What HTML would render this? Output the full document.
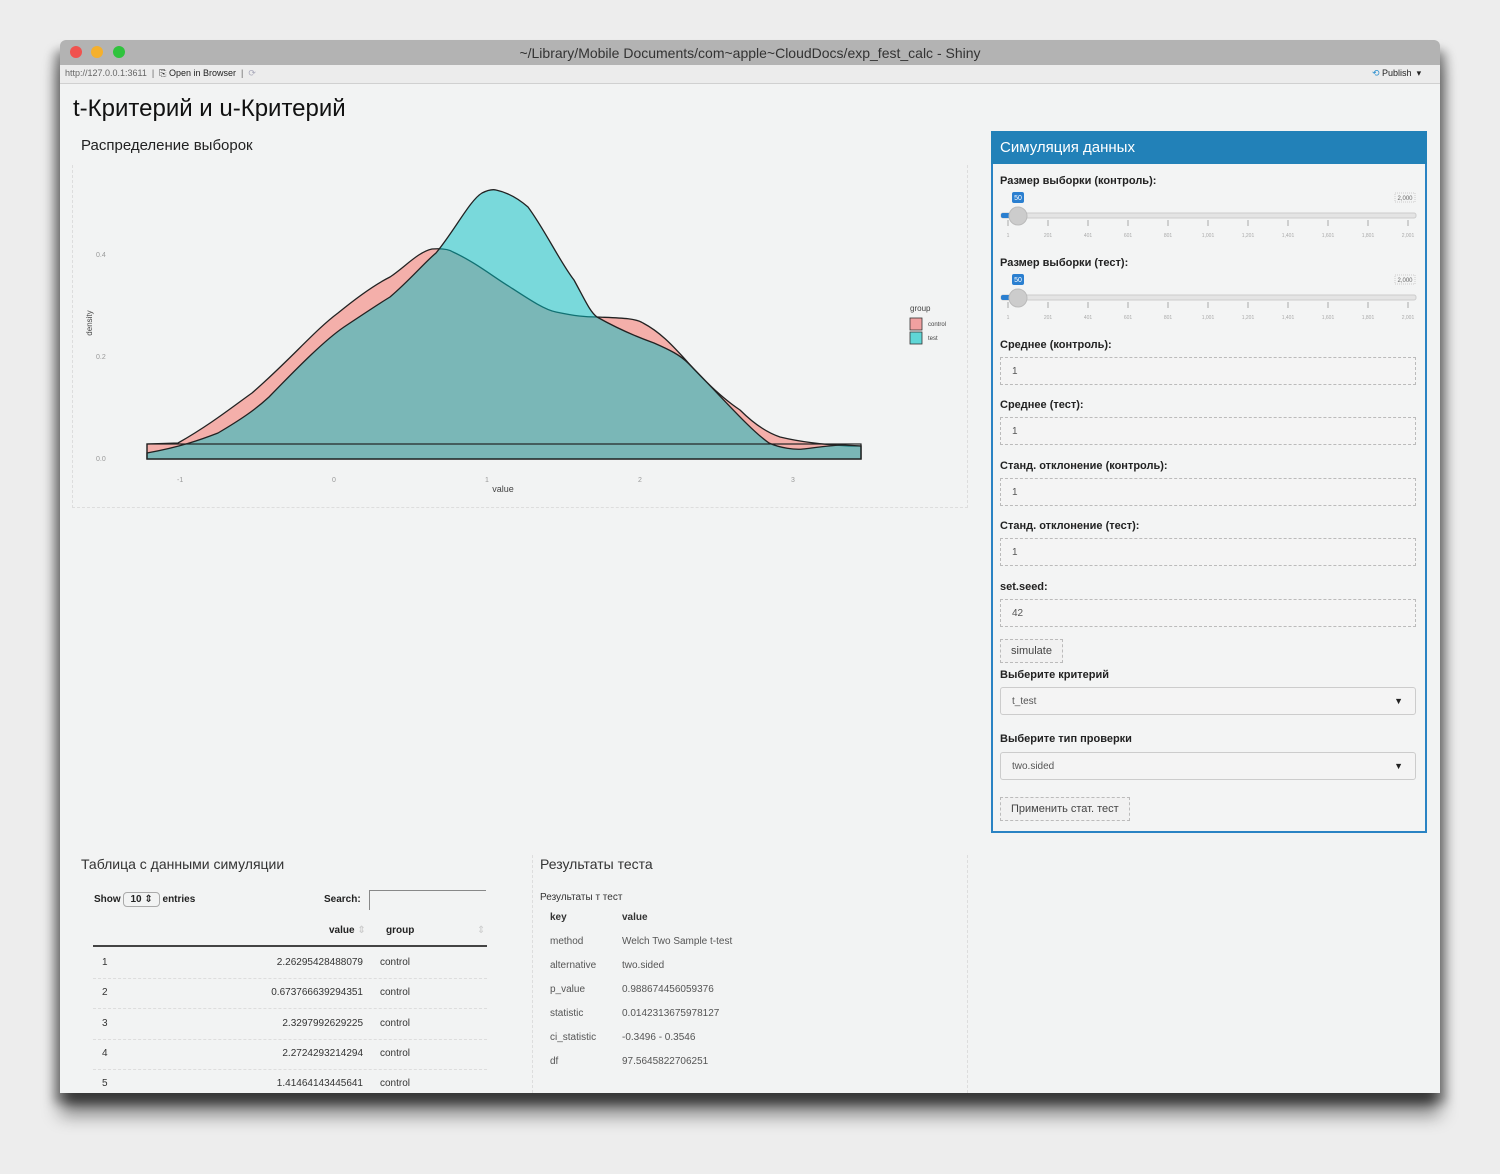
<!DOCTYPE html>
<html><head><meta charset="utf-8"><style>
*{box-sizing:border-box;margin:0;padding:0}
body{width:1500px;height:1174px;background:#ededed;position:relative;overflow:hidden;font-family:"Liberation Sans","DejaVu Sans",sans-serif;color:#222}
.a{position:absolute;white-space:nowrap}
#win{position:absolute;left:60px;top:40px;width:1380px;height:1053px;background:#f2f3f3;box-shadow:0 22px 18px rgba(0,0,0,.45),-6px 10px 10px rgba(0,0,0,.35),6px 10px 10px rgba(0,0,0,.35);border-radius:6px 6px 0 0;overflow:hidden}
#tb{position:absolute;left:0;top:0;width:1380px;height:25px;background:#b3b3b3}
#tool{position:absolute;left:0;top:25px;width:1380px;height:19px;background:#ececec;border-bottom:1px solid #d0d0d0}
.dot{position:absolute;top:6px;width:12px;height:12px;border-radius:50%}
.lbl{font-size:11px;font-weight:bold;color:#222}
.inp{position:absolute;left:1000px;width:416px;height:28px;border:1px dashed #bbb;background:#f4f4f4;font-size:10px;color:#555;padding:8px 11px}
.btn{position:absolute;border:1px dashed #bbb;background:#f1f1f1;font-size:11px;color:#444;padding:5px 10px}
.tr{font-size:10px;color:#333}
</style></head><body>
<div id="win">
<div id="tb">
<div class="dot" style="left:10px;background:#f0524f"></div>
<div class="dot" style="left:31px;background:#f5b02d"></div>
<div class="dot" style="left:53px;background:#2fc33d"></div>
<div class="a" style="left:0;width:1380px;text-align:center;top:5px;font-size:14px;color:#333">~/Library/Mobile Documents/com~apple~CloudDocs/exp_fest_calc - Shiny</div>
</div>
<div id="tool">
<div class="a" style="left:5px;top:3px;font-size:9px;color:#666">http://127.0.0.1:3611 &nbsp;|&nbsp; <span style="color:#222">⎘ Open in Browser</span> &nbsp;|&nbsp; <span style="color:#aab">⟳</span></div>
<div class="a" style="left:1312px;top:3px;font-size:9px;color:#222"><span style="color:#2a8fd0">⟲</span> Publish &nbsp;▾</div>
</div>
</div>

<div class="a" style="left:73px;top:95px;font-size:24px;color:#111">t-Критерий и u-Критерий</div>
<div class="a" style="left:81px;top:137px;font-size:15px;color:#222">Распределение выборок</div>
<div class="a" style="left:72px;top:165px;width:896px;height:343px;border:1px dashed #ddd;border-top:none"></div>

<svg class="a" style="left:0;top:0" width="1000" height="520">
<g font-family="Liberation Sans" font-size="7" fill="#999">
<text x="96" y="257">0.4</text><text x="96" y="359">0.2</text><text x="96" y="461">0.0</text>
<text x="177" y="482">-1</text><text x="332" y="482">0</text><text x="485" y="482">1</text><text x="638" y="482">2</text><text x="791" y="482">3</text>
</g>
<text x="503" y="492" font-family="Liberation Sans" font-size="9" fill="#444" text-anchor="middle">value</text>
<text x="92" y="323" font-family="Liberation Sans" font-size="8" fill="#444" text-anchor="middle" transform="rotate(-90 92 323)">density</text>
<path d="M147,459 L147,444 L178,443 C210,425 235,405 252,393 C290,360 315,330 338,313 C360,295 378,283 390,277 C405,267 418,252 432,249 C445,248 450,250 453,252 C475,262 495,278 510,287 C530,300 545,310 556,312 C575,316 585,317 597,317 C620,318 635,318 643,323 C660,332 672,345 683,357 C705,382 725,400 740,410 C755,425 768,433 780,437 C805,443 830,445 849,446 L861,446 L861,459 Z" fill="rgba(245,118,110,0.55)" stroke="#222" stroke-width="1.3"/>
<path d="M147,459 L147,453 C180,447 200,440 218,433 C240,420 255,410 269,397 C300,365 325,340 344,327 C365,313 380,303 390,297 C410,280 425,262 436,253 C455,230 470,200 482,193 C488,190 492,189 496,190 C510,193 520,200 528,207 C545,230 560,262 574,280 C585,300 590,312 597,317 C620,330 640,338 654,343 C670,350 680,355 688,363 C720,395 750,430 769,443 C780,448 795,450 803,449 C820,447 835,445 843,445 L861,446 L861,459 Z" fill="rgba(0,192,196,0.5)" stroke="#222" stroke-width="1.3"/>
<rect x="147" y="444" width="714" height="15" fill="none" stroke="#222" stroke-width="1.2"/>
<text x="910" y="311" font-family="Liberation Sans" font-size="8" fill="#444">group</text>
<rect x="910" y="318" width="12" height="12" fill="#f0a0a0" stroke="#333" stroke-width="0.8"/>
<rect x="910" y="332" width="12" height="12" fill="#5fd6d6" stroke="#333" stroke-width="0.8"/>
<text x="928" y="326" font-family="Liberation Sans" font-size="6" fill="#444">control</text>
<text x="928" y="340" font-family="Liberation Sans" font-size="6" fill="#444">test</text>
</svg>

<div class="a" style="left:991px;top:131px;width:436px;height:702px;border:2px solid #2a83c3;background:#f3f4f4"></div>
<div class="a" style="left:991px;top:131px;width:436px;height:33px;background:#2281b8;color:#fff;font-size:15px;padding:8px 9px">Симуляция данных</div>

<div class="a lbl" style="left:1000px;top:175px">Размер выборки (контроль):</div>
<div class="a lbl" style="left:1000px;top:257px">Размер выборки (тест):</div>
<svg class="a" style="left:995px;top:188px" width="430" height="140">
<g id="sl">
<rect x="17" y="4" width="12" height="11" rx="2" fill="#2a7fd0"/><text x="23" y="12" font-size="7" fill="#fff" text-anchor="middle" font-family="Liberation Sans">50</text>
<rect x="400" y="5" width="20" height="9" fill="none" stroke="#ccc" stroke-dasharray="1,1"/><text x="410" y="12" font-size="6" fill="#666" text-anchor="middle" font-family="Liberation Sans">2,000</text>
<rect x="6" y="25" width="415" height="5" rx="2" fill="#e4e4e4" stroke="#ccc"/>
<rect x="6" y="25" width="18" height="5" rx="2" fill="#2a7fd0"/>
<circle cx="23" cy="28" r="9" fill="#ccc" stroke="#bbb"/>
<g stroke="#aaa" stroke-width="1">
<line x1="13" y1="32" x2="13" y2="38"/><line x1="53" y1="32" x2="53" y2="38"/><line x1="93" y1="32" x2="93" y2="38"/><line x1="133" y1="32" x2="133" y2="38"/><line x1="173" y1="32" x2="173" y2="38"/><line x1="213" y1="32" x2="213" y2="38"/><line x1="253" y1="32" x2="253" y2="38"/><line x1="293" y1="32" x2="293" y2="38"/><line x1="333" y1="32" x2="333" y2="38"/><line x1="373" y1="32" x2="373" y2="38"/><line x1="413" y1="32" x2="413" y2="38"/>
</g>
<g font-size="5" fill="#aaa" font-family="Liberation Sans" text-anchor="middle">
<text x="13" y="49">1</text><text x="53" y="49">201</text><text x="93" y="49">401</text><text x="133" y="49">601</text><text x="173" y="49">801</text><text x="213" y="49">1,001</text><text x="253" y="49">1,201</text><text x="293" y="49">1,401</text><text x="333" y="49">1,601</text><text x="373" y="49">1,801</text><text x="413" y="49">2,001</text>
</g>
</g>
<use href="#sl" y="82"/>
</svg>

<div class="a lbl" style="left:1000px;top:339px">Среднее (контроль):</div>
<div class="inp" style="top:357px">1</div>
<div class="a lbl" style="left:1000px;top:399px">Среднее (тест):</div>
<div class="inp" style="top:417px">1</div>
<div class="a lbl" style="left:1000px;top:460px">Станд. отклонение (контроль):</div>
<div class="inp" style="top:478px">1</div>
<div class="a lbl" style="left:1000px;top:520px">Станд. отклонение (тест):</div>
<div class="inp" style="top:538px">1</div>
<div class="a lbl" style="left:1000px;top:581px">set.seed:</div>
<div class="inp" style="top:599px">42</div>
<div class="btn" style="left:1000px;top:639px">simulate</div>
<div class="a lbl" style="left:1000px;top:669px">Выберите критерий</div>
<div class="inp" style="top:687px;border-style:solid;border-color:#ccc;border-radius:3px">t_test<span style="position:absolute;right:12px;top:8px;font-size:9px;color:#222">▼</span></div>
<div class="a lbl" style="left:1000px;top:733px">Выберите тип проверки</div>
<div class="inp" style="top:752px;border-style:solid;border-color:#ccc;border-radius:3px">two.sided<span style="position:absolute;right:12px;top:8px;font-size:9px;color:#222">▼</span></div>
<div class="btn" style="left:1000px;top:797px">Применить стат. тест</div>

<div class="a" style="left:81px;top:856px;font-size:14px;color:#333">Таблица с данными симуляции</div>
<div class="a" style="left:94px;top:892px;font-size:10px;font-weight:bold">Show <span style="display:inline-block;border:1px solid #aaa;border-radius:4px;padding:1px 6px">10 ⇕</span> entries</div>
<div class="a" style="left:324px;top:894px;font-size:10px;font-weight:bold">Search:</div>
<div class="a" style="left:369px;top:890px;width:117px;height:20px;border-top:1px solid #888;border-left:1px solid #888"></div>
<div class="a" style="left:329px;top:925px;font-size:10px;font-weight:bold">value <span style="color:#ccc">⇕</span></div>
<div class="a" style="left:386px;top:925px;font-size:10px;font-weight:bold">group</div>
<div class="a" style="left:477px;top:925px;font-size:10px;color:#ccc">⇕</div>
<div class="a" style="left:93px;top:945px;width:394px;height:2px;background:#444"></div>
<div class="a tr" style="left:102px;top:957px">1</div><div class="a tr" style="left:200px;width:163px;text-align:right;top:957px">2.26295428488079</div><div class="a tr" style="left:380px;top:957px">control</div>
<div class="a" style="left:93px;top:978px;width:394px;border-top:1px dashed #ddd"></div>
<div class="a tr" style="left:102px;top:987px">2</div><div class="a tr" style="left:200px;width:163px;text-align:right;top:987px">0.673766639294351</div><div class="a tr" style="left:380px;top:987px">control</div>
<div class="a" style="left:93px;top:1008px;width:394px;border-top:1px dashed #ddd"></div>
<div class="a tr" style="left:102px;top:1018px">3</div><div class="a tr" style="left:200px;width:163px;text-align:right;top:1018px">2.3297992629225</div><div class="a tr" style="left:380px;top:1018px">control</div>
<div class="a" style="left:93px;top:1039px;width:394px;border-top:1px dashed #ddd"></div>
<div class="a tr" style="left:102px;top:1048px">4</div><div class="a tr" style="left:200px;width:163px;text-align:right;top:1048px">2.2724293214294</div><div class="a tr" style="left:380px;top:1048px">control</div>
<div class="a" style="left:93px;top:1069px;width:394px;border-top:1px dashed #ddd"></div>
<div class="a tr" style="left:102px;top:1078px">5</div><div class="a tr" style="left:200px;width:163px;text-align:right;top:1078px">1.41464143445641</div><div class="a tr" style="left:380px;top:1078px">control</div>

<div class="a" style="left:532px;top:855px;height:238px;border-left:1px dashed #ddd"></div>
<div class="a" style="left:967px;top:855px;height:238px;border-left:1px dashed #ddd"></div>

<div class="a" style="left:540px;top:856px;font-size:14px;color:#333">Результаты теста</div>
<div class="a tr" style="left:540px;top:892px">Результаты т тест</div>
<div class="a tr" style="left:550px;top:912px;font-weight:bold">key</div><div class="a tr" style="left:622px;top:912px;font-weight:bold">value</div>
<div class="a tr" style="left:550px;top:936px;color:#555">method</div><div class="a tr" style="left:622px;top:936px;color:#555">Welch Two Sample t-test</div>
<div class="a tr" style="left:550px;top:960px;color:#555">alternative</div><div class="a tr" style="left:622px;top:960px;color:#555">two.sided</div>
<div class="a tr" style="left:550px;top:984px;color:#555">p_value</div><div class="a tr" style="left:622px;top:984px;color:#555">0.988674456059376</div>
<div class="a tr" style="left:550px;top:1008px;color:#555">statistic</div><div class="a tr" style="left:622px;top:1008px;color:#555">0.0142313675978127</div>
<div class="a tr" style="left:550px;top:1032px;color:#555">ci_statistic</div><div class="a tr" style="left:622px;top:1032px;color:#555">-0.3496 - 0.3546</div>
<div class="a tr" style="left:550px;top:1056px;color:#555">df</div><div class="a tr" style="left:622px;top:1056px;color:#555">97.5645822706251</div>
</body></html>
